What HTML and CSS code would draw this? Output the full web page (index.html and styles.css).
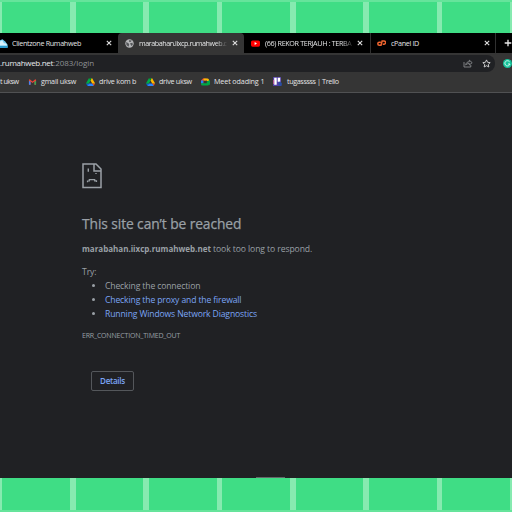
FILE: index.html
```
<!DOCTYPE html>
<html lang="en">
<head>
<meta charset="utf-8">
<title>marabahan.iixcp.rumahweb.net</title>
<link rel="stylesheet" href="styles.css">
</head>
<body>
<svg width="0" height="0" class="defs">
  <symbol id="close" viewBox="0 0 6 6"><path d="M.8.8 5.2 5.2M5.2.8.8 5.2" stroke="#dedede" stroke-width="1.1"/></symbol>
  <symbol id="drive" viewBox="0 0 87 78"><path fill="#0066da" d="m7 67 4 6c1 2 2 3 3 4l14-24H0c0 2 .5 3 1 4z"/><path fill="#00ac47" d="M44 25 30 1c-1 1-3 2-3 3L1 48c-1 2-1 3-1 5h28z"/><path fill="#ea4335" d="M74 77c1-1 2-2 3-4l9-16c1-1 1-3 1-4H60l6 11z"/><path fill="#00832d" d="M44 25 57 1c-1-1-3-1-4-1H34c-1 0-3 0-4 1z"/><path fill="#2684fc" d="M60 53H28L14 77c1 1 3 1 4 1h51c1 0 3 0 5-1z"/><path fill="#ffba00" d="M73 27 61 4c-1-1-2-2-4-3L44 25l16 28h27c0-2 0-3-1-5z"/></symbol>
</svg>
<main class="canvas">
  <section class="browser">
    <div class="tabs">
      <div class="tab tab-first">
        <svg class="fav cloud" viewBox="0 0 8 9"><path d="M0 8.8V1.2L2.5.3 5.2 2.6 7.6 5.8v3z" fill="#6fcdf2"/><path d="M0 2.5 2.2 1.2 4 4.2l2.2.4.9 2.2H0z" fill="#d5f1fd"/><path d="M0 6.8h7.6v2H0z" fill="#259bd0"/></svg>
        <span class="title t-client">Clientzone Rumahweb</span>
        <svg class="x"><use href="#close"/></svg>
      </div>
      <div class="tab tab-active">
        <svg class="fav" viewBox="0 0 9 9"><circle cx="4.5" cy="4.5" r="4.2" fill="#b4b5b7"/><path d="M1.2 3 3.5 4.2 4.2 5.5 3.5 7.8 1.4 6zM4 1.2 6.8 1.4 5.5 3 4 2.7zM5 4.3l2.5-.5.3 2L6.3 7z" fill="#55575a"/></svg>
        <span class="title t-mara">marabahan.iixcp.rumahweb.c</span>
        <svg class="x"><use href="#close"/></svg>
      </div>
      <div class="tab tab-video">
        <svg class="fav" viewBox="0 0 9 9"><rect y="1.4" width="9" height="6.3" rx="1.6" fill="#f00"/><path d="M3.6 3.1v2.8L6 4.5z" fill="#fff"/></svg>
        <span class="title t-video">(66) REKOR TERJAUH : TERBA</span>
        <svg class="x"><use href="#close"/></svg>
      </div>
      <div class="tab tab-cpanel">
        <svg class="fav" viewBox="0 0 9 9"><path d="M3.8 3.2H2.3a1.5 1.5 0 0 0 0 3H4L5.1 2H7a1.5 1.5 0 0 1 0 3.2H5.7" fill="none" stroke="#f0652f" stroke-width="1.5"/></svg>
        <span class="title t-cpanel">cPanel ID</span>
        <svg class="x"><use href="#close"/></svg>
      </div>
      <svg class="plus" viewBox="0 0 8 8"><path d="M4 .7v6.6M.7 4h6.6" stroke="#e8e8e8" stroke-width="1.3"/></svg>
    </div>
    <div class="toolbar">
      <div class="address">
        <span class="url"><b>.rumahweb.net</b><span class="path">:2083/login</span></span>
        <svg class="share" viewBox="0 0 10 9"><path d="M1 3v5h6.8V6M2.7 6C3 3.8 4.3 2.8 6.3 2.8V1.2L9.2 3.7 6.3 6V4.5C4.6 4.5 3.6 5 2.7 6z" fill="none" stroke="#96989b" stroke-width=".8"/></svg>
        <svg class="star" viewBox="0 0 9 9"><path d="m4.5.9 1.1 2.4 2.6.3-1.9 1.8.5 2.6-2.3-1.3L2.2 8l.5-2.6L.8 3.6l2.6-.3z" fill="none" stroke="#d9dadb" stroke-width=".9"/></svg>
      </div>
      <svg class="grammarly" viewBox="0 0 9 9"><circle cx="4.5" cy="4.5" r="4.5" fill="#15c39a"/><path d="M6.6 2.8A2.6 2.6 0 1 0 7 5H5" fill="none" stroke="#e8fff8" stroke-width=".9"/></svg>
    </div>
    <nav class="bookmarks">
      <span class="mark m-first">t uksw</span>
      <svg class="icon" viewBox="0 0 9 9"><path d="M.5 2v5.5h1.8V4L4.5 5.6 6.7 4v3.5h1.8V2L7.6 1.5 4.5 3.8 1.4 1.5z" fill="#ea4335"/><path d="M.5 3v4.5h1.8V4.2z" fill="#4285f4"/><path d="M8.5 3v4.5H6.7V4.2z" fill="#34a853"/></svg>
      <span class="mark m-gmail">gmail uksw</span>
      <svg class="icon"><use href="#drive"/></svg>
      <span class="mark m-kom">drive kom b</span>
      <svg class="icon"><use href="#drive"/></svg>
      <span class="mark m-drive">drive uksw</span>
      <svg class="icon" viewBox="0 0 9 8"><path d="M2 .5h3.5v2H2.3v3H0V2.5z" fill="#e94335"/><path d="M2.5.5h4.2Q8 .5 8 2v1.2L6 3V2.5H2.5z" fill="#fbbc04"/><path d="M0 2.5h2.3v3H0z" fill="#2684fc"/><path d="M0 5.3h5.8V3.5L9 2v5L8 6.5Q8 7.5 6.5 7.5H1.5Q0 7.5 0 6z" fill="#00a845"/></svg>
      <span class="mark m-meet">Meet odading 1</span>
      <svg class="icon trello" viewBox="0 0 9 9"><path d="M0 0h8v9H0z" fill="#5340a5"/><path d="M1.2.8h2.5v7H1.2zM4.7.8h2.5v4H4.7z" fill="#fff"/><path d="M6.8 4.5 8.8 6v2.7H5.7V6z" fill="#294ea2"/><path d="M0 3h1.2v4H0z" fill="#b45a98"/></svg>
      <span class="mark m-trello">tugasssss | Trello</span>
    </nav>
    <article class="page">
      <svg class="sad" viewBox="0 0 20 26"><path d="M1 1H14L19 6V24.5H1z" fill="none" stroke="#9aa0a6" stroke-width="1.5"/><path d="M12 1V8H19" fill="none" stroke="#9aa0a6" stroke-width="1.5"/><path d="M6.3 5.5v3.2M14 10v1" stroke="#9aa0a6" stroke-width="1.4"/><path d="M5.5 19.2v-1.2H7.3V16.6h5.4v1.3h1.8v1.2" fill="none" stroke="#9aa0a6" stroke-width="1.2"/></svg>
      <h1>This site can’t be reached</h1>
      <p class="summary"><b>marabahan.iixcp.rumahweb.net</b> <span>took too long to respond.</span></p>
      <p class="try">Try:</p>
      <ul>
        <li>Checking the connection</li>
        <li><a>Checking the proxy and the firewall</a></li>
        <li><a>Running Windows Network Diagnostics</a></li>
      </ul>
      <p class="code">ERR_CONNECTION_TIMED_OUT</p>
      <button>Details</button>
      <i class="handle"></i>
    </article>
  </section>
</main>
</body>
</html>
```
FILE: styles.css
```
* { box-sizing: border-box; }
body { margin: 0; overflow: hidden; font-family: "Open Sans", "Noto Sans", sans-serif; }
.defs { position: absolute; }
.canvas {
  width: 512px; height: 512px; padding-top: 33px; overflow: hidden;
  background:
    linear-gradient(#65e49b, #65e49b) 0 0 / 100% 2px no-repeat,
    linear-gradient(#65e49b, #65e49b) 0 100% / 100% 2px no-repeat,
    repeating-linear-gradient(90deg, #86eab0 0 5.6px, #3fdd85 5.6px 73.35px) -3.3px 0 / 520px 100%;
}
.browser { width: 512px; height: 444.6px; overflow: hidden; background: #202124; }
svg { flex: none; display: block; }
.tabs { height: 20px; background: #000; display: flex; }
.tab { display: flex; align-items: center; color: #e3e4e5; font-size: 7.2px; flex: none; }
.tab-first { width: 118px; padding-right: 6px; }
.tab-active { width: 126px; padding: 0 6px 0 7px; background: #353535; border-radius: 4px 4px 0 0; }
.tab-video { width: 127px; padding: 0 7px 0 7px; border-right: 1px solid #303030; }
.tab-cpanel { width: 125px; padding: 0 5px 0 6px; border-right: 1px solid #303030; }
.fav { width: 9px; height: 9px; margin-right: 5px; }
.cloud { width: 8px; margin-right: 4px; }
.title { white-space: nowrap; overflow: hidden; flex: 1; line-height: 12px; }
.t-mara, .t-video { flex: none; width: 89px; margin-right: auto; -webkit-mask-image: linear-gradient(90deg, #000 86%, transparent); mask-image: linear-gradient(90deg, #000 86%, transparent); }
.t-client { letter-spacing: -.32px; }
.t-mara { letter-spacing: -.46px; }
.t-video { letter-spacing: -.35px; }
.t-cpanel { letter-spacing: -.35px; }
.x { width: 6px; height: 6px; }
.plus { width: 8px; height: 8px; margin: 6px 0 0 8px; }
.toolbar { height: 20px; background: #353535; display: flex; align-items: center; }
.address { width: 497px; height: 17px; background: #202124; border-radius: 0 8px 8px 0; display: flex; align-items: center; padding-right: 5px; }
.url { line-height: 11px; padding-bottom: 1px; white-space: nowrap; font-size: 8px; color: #e8eaed; margin-right: auto; }
.url b { font-weight: 500; letter-spacing: -.3px; }
.path { color: #8f9296; letter-spacing: -.03px; }
.share { width: 10px; height: 9px; margin-right: 9px; }
.star { width: 9px; height: 9px; }
.share, .star { transform: translateX(1px); }
.grammarly { width: 9px; height: 9px; margin-left: 8px; }
.bookmarks { height: 20px; background: #353535; border-bottom: 1px solid #505153; display: flex; align-items: center; color: #e3e4e5; font-size: 7.2px; letter-spacing: -.22px; padding-bottom: 2px; }
.mark { white-space: nowrap; flex: none; margin-left: 4px; line-height: 12px; padding-bottom: 1px; }
.icon { width: 9px; height: 8px; }
.trello { height: 9px; }
.m-first { width: 28px; margin-left: 0; letter-spacing: -.5px; }
.m-gmail { width: 45px; }
.m-kom { width: 47px; }
.m-drive { width: 42px; letter-spacing: -.3px; }
.m-meet { width: 59px; letter-spacing: -.13px; }
.m-trello { margin-left: 5px; letter-spacing: -.38px; }
.page { position: relative; padding: 70.4px 0 0 82px; height: 384.6px; color: #9aa0a6; font-size: 8.6px; letter-spacing: -.09px; white-space: nowrap; }
.sad { width: 20px; height: 26px; }
h1 { margin: 24px 0 0; font-size: 13.8px; line-height: 21px; font-weight: 500; letter-spacing: -.09px; -webkit-text-stroke: .25px #9aa0a6; }
p { margin: 0; line-height: 14px; }
.summary { margin-top: 7.6px; }
.summary b { font-size: 8px; letter-spacing: 0; }
.try { margin-top: 9px; }
ul { margin: 0; padding: 0 0 0 23px; line-height: 14px; letter-spacing: -.13px; }
a { color: #7ba5f5; }
.code { margin-top: 8px; font-size: 7px; letter-spacing: -.18px; }
button { display: block; width: 43px; height: 20px; margin: 28px 0 0 9px; padding: 0 0 1px; background: none; border: 1px solid #54575b; border-radius: 2px; font: 600 8px "Open Sans", sans-serif; letter-spacing: -.25px; color: #7ba5f5; }
.handle { position: absolute; bottom: 0; left: 256px; width: 29px; height: 1px; background: #65676a; }
```
